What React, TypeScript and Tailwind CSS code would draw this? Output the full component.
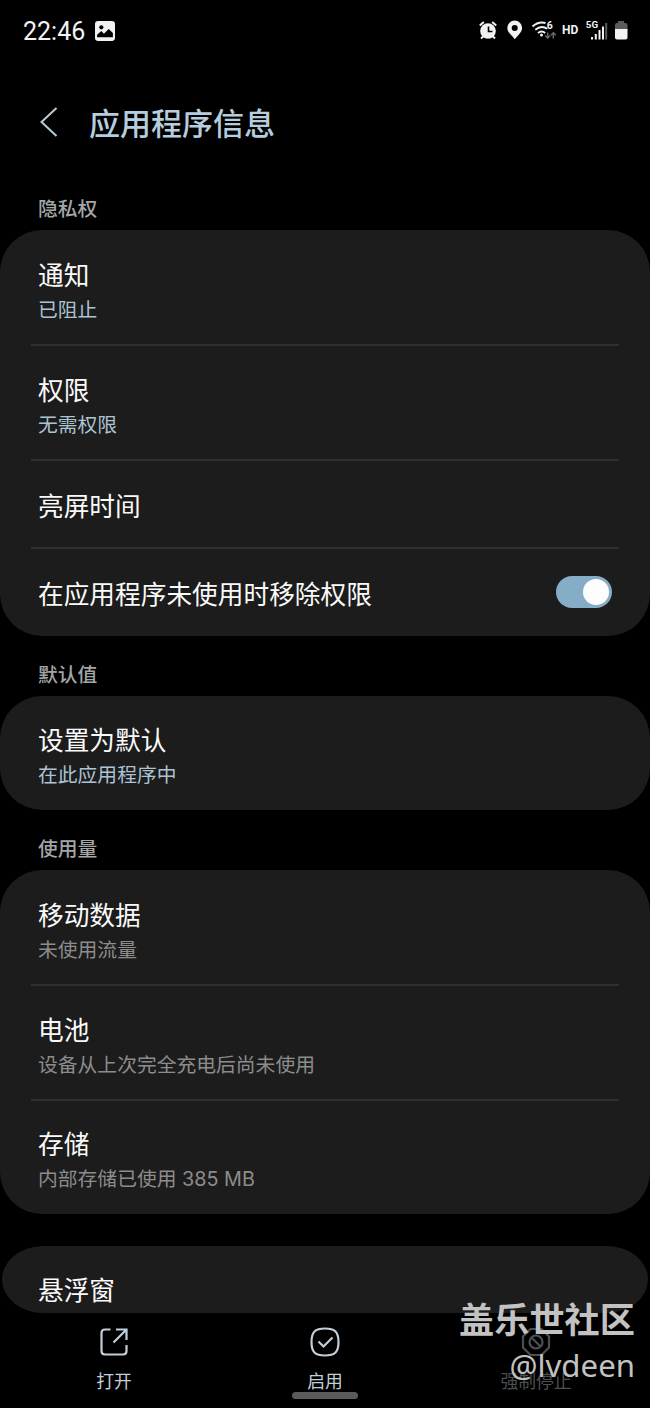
import { useState, type ReactNode } from 'react';
import clsx from 'clsx';

type RowProps = {
  title: string;
  detail?: string;
  muted?: boolean;
};

function Row({ title, detail, muted }: RowProps) {
  return (
    <div
      className={clsx(
        'flex flex-col justify-center px-[38px]',
        detail ? 'h-[115px] pt-[7px] last:h-[114px]' : 'h-[88px] pt-[6px]',
      )}
    >
      <div className="text-[25.7px] leading-[38px] text-[#fafafa]">{title}</div>
      {detail && (
        <div
          className={clsx(
            'text-[19.8px] leading-[31px]',
            muted ? 'text-[#8c8c8c]' : 'text-[#abc3d3]',
          )}
        >
          {detail}
        </div>
      )}
    </div>
  );
}

function Divider() {
  return <div className="mx-[31px] -my-px h-0.5 bg-[#303030]" />;
}

function Section({ label, children }: { label: string; children: ReactNode }) {
  return (
    <section className="shrink-0">
      <h2 className="h-[60px] px-[38px] pt-[24px] text-[19.8px] leading-[30px] font-medium text-[#a3a6a9]">
        {label}
      </h2>
      <div className="overflow-hidden rounded-[42px] bg-[#1c1c1c]">{children}</div>
    </section>
  );
}

function Toggle() {
  const [on, setOn] = useState(true);

  return (
    <button
      type="button"
      role="switch"
      aria-checked={on}
      onClick={() => setOn(!on)}
      className={clsx(
        'flex h-8 w-14 items-center rounded-full px-[3px]',
        on ? 'justify-end bg-[#86adc7]' : 'justify-start bg-[#5a5a5a]',
      )}
    >
      <span className="h-[26px] w-[26px] rounded-full bg-[#fdfdfd]" />
    </button>
  );
}

function StatusBar() {
  return (
    <div className="flex h-[60px] shrink-0 items-center justify-between pr-[22px] pl-[23px] text-[#f2f2f2]">
      <div className="flex items-center gap-[10px]">
        <span className="pt-[3px] font-['Roboto'] text-[25px] leading-none">22:46</span>
        <svg className="mt-px" width="20" height="20" viewBox="0 0 19 19">
          <rect width="19" height="19" rx="3" fill="currentColor" />
          <circle cx="6" cy="6" r="2" fill="#000" />
          <path d="M2 15.500V13l4-3.500L8.500 12 13 7.500l4 4v4Z" fill="#000" />
        </svg>
      </div>

      <svg width="150" height="24" viewBox="478 18 150 24" fill="none">
        {/* Alarm */}
        <circle cx="488" cy="31" r="7.800" fill="currentColor" />
        <path
          d="m479.800 25.500 4-3.500M496.200 25.500l-4-3.500M483.500 36l-2.500 2.500M492.500 36l2.500 2.500"
          stroke="currentColor"
          strokeWidth="2"
        />
        <path d="M488.500 26.500v5h4" stroke="#000" strokeWidth="1.600" />
        {/* Location */}
        <path
          fillRule="evenodd"
          d="M514.700 20.500a7.400 7.400 0 0 0-7.400 7.400c0 4.600 5.400 8.400 7.400 11.400 2-3 7.400-6.800 7.400-11.400a7.400 7.400 0 0 0-7.400-7.400Zm0 4.500a3 3 0 1 1 0 6 3 3 0 0 1 0-6Z"
          fill="currentColor"
        />
        {/* Wi-Fi */}
        <path
          d="M532.500 26.500q6-5.500 13-3.500M535.300 29.800q6-5 12-1M538 33q3.700-3 7.200 0"
          stroke="currentColor"
          strokeWidth="1.900"
        />
        <circle cx="541.500" cy="35" r="1.500" fill="currentColor" />
        <text x="546.800" y="29.300" fontFamily="Roboto" fontSize="10.500" fontWeight="700" fill="currentColor">
          6
        </text>
        <path
          d="M547.700 32.500v5.500m-2.500-2.500 2.500 2.700 2.500-2.700M553.300 38.500V33m-2.500 2.200 2.500-2.500 2.500 2.500"
          stroke="#666"
          strokeWidth="1.500"
        />
        <text x="562" y="34.300" fontFamily="Roboto" fontSize="12" fontWeight="700" fill="currentColor">
          HD
        </text>
        {/* Mobile signal */}
        <text x="585.800" y="28.300" fontFamily="Roboto" fontSize="9.800" fontWeight="700" fill="currentColor">
          5G
        </text>
        <path
          d="M592 37v2.500M595.800 34v5.500M599.500 30v9.500M603 26.500v13"
          stroke="currentColor"
          strokeWidth="2"
        />
        <path d="M606.200 23v16.500" stroke="#5c5c5c" strokeWidth="2" />
        {/* Battery */}
        <path d="M615 30v-5q0-2 2-2h1v-2h6v2h1.500q2 0 2 2v5Z" fill="#5c5c5c" />
        <path d="M615 29h12.500v8.500q0 2-2 2H617q-2 0-2-2Z" fill="currentColor" />
      </svg>
    </div>
  );
}

function Action({ label, disabled, children }: { label: string; disabled?: boolean; children: ReactNode }) {
  return (
    <button
      type="button"
      disabled={disabled}
      className={clsx(
        'flex w-[211px] flex-col items-center pt-[13px]',
        disabled ? 'text-[#4c4f52]' : 'text-[#c2cfda]',
      )}
    >
      <svg width="32" height="32" viewBox="0 0 32 32" fill="none" stroke="currentColor" strokeWidth="2.200">
        {children}
      </svg>
      <span className="mt-[10px] text-[17.8px] leading-[28px]">{label}</span>
    </button>
  );
}

export default function App() {
  return (
    <div className="relative flex h-[1408px] w-[650px] flex-col overflow-hidden bg-black font-['Inter','Noto_Sans_CJK_SC',sans-serif]">
      <StatusBar />

      <header className="flex h-[110px] shrink-0 items-center gap-[31px] pt-[14px] pl-[40px]">
        <svg width="18" height="30" viewBox="0 0 18 30" fill="none" stroke="#b9cbd8" strokeWidth="2">
          <path d="M16.500 1 1.500 15l15 14" />
        </svg>
        <h1 className="pt-[3px] text-[31px] leading-[44px] font-medium text-[#b6cddd]">应用程序信息</h1>
      </header>

      <Section label="隐私权">
        <Row title="通知" detail="已阻止" />
        <Divider />
        <Row title="权限" detail="无需权限" />
        <Divider />
        <Row title="亮屏时间" />
        <Divider />
        <div className="flex items-center justify-between pr-[38px]">
          <Row title="在应用程序未使用时移除权限" />
          <Toggle />
        </div>
      </Section>

      <Section label="默认值">
        <Row title="设置为默认" detail="在此应用程序中" />
      </Section>

      <Section label="使用量">
        <Row title="移动数据" detail="未使用流量" muted />
        <Divider />
        <Row title="电池" detail="设备从上次完全充电后尚未使用" muted />
        <Divider />
        <Row title="存储" detail="内部存储已使用 385 MB" muted />
      </Section>

      <div className="mx-[2px] mt-8 h-[67px] shrink-0 overflow-hidden rounded-[42px/34px] bg-[#1c1c1c]">
        <div className="-mx-[2px] -mt-[2px]">
          <Row title="悬浮窗" />
        </div>
      </div>

      <nav className="flex h-[95px] shrink-0 justify-center">
        <Action label="打开">
          <path d="M12.500 3.500H7q-3.500 0-3.500 3.500v18q0 3.500 3.500 3.500h18q3.500 0 3.500-3.500v-6M18 3.500h10.500V14M28 4 15.500 16.500" />
        </Action>
        <Action label="启用">
          <path d="M16 2.500c10 0 13.500 3.500 13.500 13.500S26 29.500 16 29.500 2.500 26 2.500 16 6 2.500 16 2.500Z" />
          <path d="m9.500 15.500 5 5 9-9" />
        </Action>
        <Action label="强制停止" disabled>
          <path d="M10.500 3h11L29 10.500v11L21.500 29h-11L3 21.500v-11Z" />
          <circle cx="16" cy="16" r="6.500" />
          <path d="m11.500 11.500 9 9" />
        </Action>
      </nav>

      {/* Gesture handle */}
      <div className="absolute bottom-[9px] left-[292px] h-[7px] w-[66px] rounded-full bg-[#5a5a5a]" />

      {/* Community watermark */}
      <div className="absolute right-[15px] bottom-[21px] flex flex-col items-end text-[#c2c2c2]">
        <div className="text-[35.2px] leading-[45px] font-bold">盖乐世社区</div>
        <div className="font-['Noto_Sans'] text-[31.2px] leading-[44px]">@lvdeen</div>
      </div>
    </div>
  );
}
